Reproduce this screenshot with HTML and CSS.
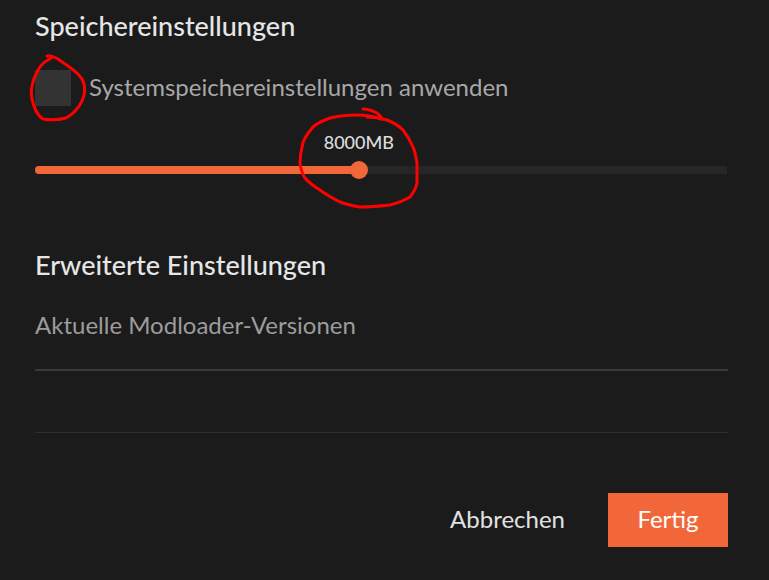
FILE: index.html
```html
<!DOCTYPE html>
<html lang="de">

<head>
	<meta charset="UTF-8">
	<meta name="viewport" content="width=device-width, initial-scale=1.0">
	<title>Einstellungen</title>
	<link rel="stylesheet" href="styles.css">
</head>

<body>
	<div class="dialog">
		<h2 class="section-title">Speichereinstellungen</h2>
		<label class="check-row">
			<span class="checkbox"></span>
			<span class="check-label">Systemspeichereinstellungen anwenden</span>
		</label>

		<div class="slider">
			<div class="slider-track">
				<div class="slider-fill" style="width: 46.8%">
					<span class="slider-value">8000MB</span>
					<span class="slider-thumb"></span>
				</div>
			</div>
		</div>

		<h2 class="section-title advanced">Erweiterte Einstellungen</h2>
		<div class="field">
			<div class="field-label">Aktuelle Modloader-Versionen</div>
		</div>
		<div class="field-empty"></div>

		<div class="actions">
			<button class="btn-text">Abbrechen</button>
			<button class="btn-primary">Fertig</button>
		</div>
	</div>

	<!-- handschriftliche Markierungen -->
	<svg class="marks" width="769" height="580" viewBox="0 0 769 580">
		<path d="M47 56 C52 55 57 58 62 62 C70 67 78 73 82 79 C86 86 85 95 82 101 C79 108 72 115 66 118 C58 120 48 120 43 119 C38 116 35 110 33 103 C31 96 31 90 32 86 C33 80 35 76 37 72 C40 66 44 62 48 60 C51 58 53 57 53 57" />
		<path d="M381 119 C373 116 365 115 357 115 C347 115 338 116 330 118 C322 121 316 124 313 127 C308 133 304 138 303 143 C301 150 300 157 300 163 C301 170 302 174 305 178 C310 184 315 187 320 190 C328 196 334 199 340 202 C348 205 354 206 360 207 C370 207 381 206 390 205 C398 203 405 200 410 197 C414 192 416 188 417 183 C417 176 417 170 417 163 C416 157 415 151 413 147 C410 140 407 135 403 130 C398 125 392 122 387 120 C380 118 373 117 367 117" />
		<path d="M363 109 C368 109 373 111 377 113 C380 115 381 117 382 119" />
	</svg>
</body>

</html>
```

FILE: styles.css
```css
body {
	font-family: Lato, "Noto Sans", sans-serif;
	margin: 0;
	background-color: #1b1b1b;
	color: #e4e4e4;
	width: 769px;
	height: 580px;
	overflow: hidden;
	position: relative;
}

.dialog {
	padding: 0 41px 0 35px;
}

.section-title {
	margin: 0;
	padding-top: 9px;
	font-size: 27px;
	font-weight: 500;
	line-height: 34px;
	color: #e6e6e6;
}

.check-row {
	display: flex;
	align-items: center;
	gap: 18px;
	margin-top: 27px;
}

.checkbox {
	width: 36px;
	height: 36px;
	background-color: #333333;
}

.check-label {
	font-size: 24px;
	line-height: 29px;
	margin-bottom: 4px;
	color: #a8a8a8;
}

.slider {
	padding-top: 60px;
	padding-right: 1px;
}

.slider-track {
	height: 8px;
	background-color: #262626;
}

.slider-fill {
	position: relative;
	height: 100%;
	background-color: #f26739;
	border-radius: 4px 0 0 4px;
}

.slider-thumb {
	position: absolute;
	right: -9px;
	top: -5px;
	width: 18px;
	height: 18px;
	border-radius: 50%;
	background-color: #f26739;
}

.slider-value {
	position: absolute;
	right: -45px;
	top: -35px;
	width: 90px;
	text-align: center;
	font-size: 18px;
	line-height: 22px;
	font-weight: 500;
	color: #dcdcdc;
}

.advanced {
	margin-top: 65px;
}

.field {
	height: 89px;
	border-bottom: 2px solid #3a3a3a;
	box-sizing: border-box;
}

.field-label {
	padding-top: 28px;
	font-size: 24px;
	line-height: 29px;
	color: #9c9c9c;
}

.field-empty {
	height: 61px;
	border-bottom: 1px solid #2f2f2f;
}

.actions {
	display: flex;
	justify-content: flex-end;
	align-items: center;
	gap: 43px;
	margin-top: 60px;
}

.btn-text,
.btn-primary {
	font-family: inherit;
	font-size: 24px;
	border: none;
	cursor: pointer;
}

.btn-text {
	background: none;
	color: #e2e2e2;
	padding: 0 0 3px;
}

.btn-primary {
	width: 120px;
	height: 54px;
	padding: 0 0 4px;
	background-color: #f26739;
	color: #ffffff;
}

.marks {
	position: absolute;
	left: 0;
	top: 0;
	pointer-events: none;
	fill: none;
	stroke: #ff0000;
	stroke-width: 3;
	stroke-linecap: round;
	stroke-linejoin: round;
}
```
